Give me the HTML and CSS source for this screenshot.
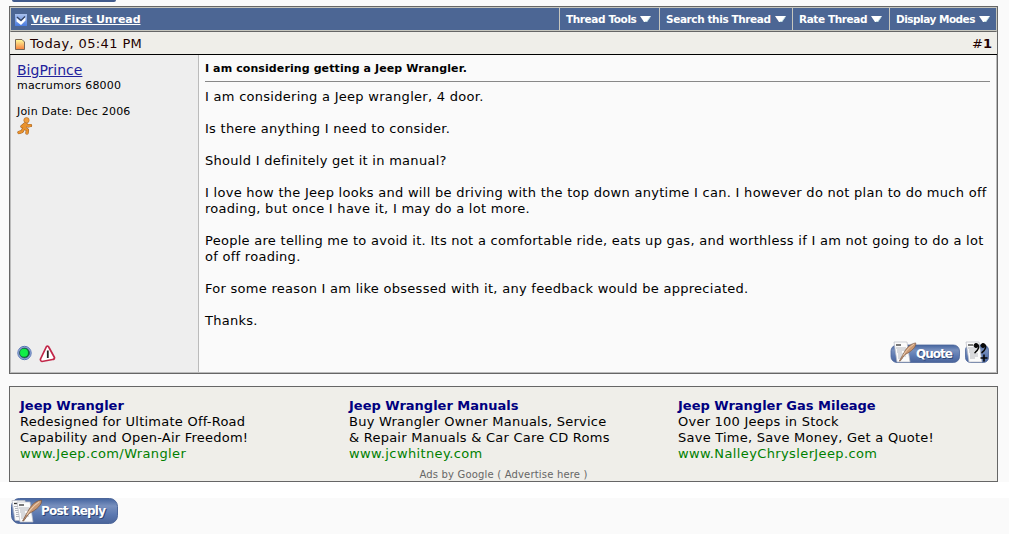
FILE: index.html
```html
<!DOCTYPE html>
<html lang="en">
<head>
  <meta charset="UTF-8">
  <title>I am considering getting a Jeep Wrangler.</title>
  <link rel="stylesheet" href="styles.css">
</head>
<body>

  <!-- shared gradients and paper drawing -->
  <svg class="defs" width="0" height="0">
    <defs>
      <linearGradient id="blue" x1="0" y1="0" x2="0" y2="1">
        <stop offset="0" stop-color="#45659f"/>
        <stop offset="0.3" stop-color="#7890be"/>
        <stop offset="0.65" stop-color="#5b78b0"/>
        <stop offset="1" stop-color="#4a649a"/>
      </linearGradient>
      <linearGradient id="folder" x1="0" y1="0" x2="0" y2="1">
        <stop offset="0" stop-color="#ffff9c"/>
        <stop offset="1" stop-color="#f8803c"/>
      </linearGradient>
      <linearGradient id="check" x1="0" y1="0" x2="0" y2="1">
        <stop offset="0" stop-color="#a9c0ec"/>
        <stop offset="1" stop-color="#4a7ce0"/>
      </linearGradient>
      <symbol id="paper" viewBox="0 0 18 22">
        <path d="M1 1L14 1L17 21L4 21Z" fill="#fbfbfb" stroke="#b9bcc4" stroke-width=".7"/>
        <path d="M3 4H8" stroke="#333" stroke-width="1.3"/>
        <path d="M3 7H13M4 9H13M4 11H9M5 13H13M5 15H13M5 17H10" stroke="#a4a7ae" stroke-width=".8"/>
      </symbol>
      <symbol id="quill" viewBox="0 0 20 22">
        <path d="M1 21L6 12C9 6 13 2 19 1C20 5 15 10 7 14L2 21Z" fill="#c99873" stroke="#76543f" stroke-width=".7"/>
        <path d="M5 15C9 9 12 6 17 2.500" fill="none" stroke="#efd1b2" stroke-width="1"/>
      </symbol>
      <symbol id="arrow" viewBox="0 0 11 7">
        <path d="M0 0H11L7 6H4Z" fill="#fff"/>
        <path d="M10 1L7 5.500H5" fill="none" stroke="#b5dade" stroke-width=".8"/>
      </symbol>
    </defs>
  </svg>

  <div class="top-button"></div>

  <div class="thread">
    <div class="toolbar">
      <div class="first-unread">
        <svg width="12" height="12" viewBox="0 0 12 12">
          <rect width="12" height="12" fill="url(#check)"/>
          <path d="M1.500 4L6 7.500L10.500 3V6.500L6 11L1.500 7.500Z" fill="#fff"/>
          <path d="M2 3L6 6.500L10 2.500" fill="none" stroke="#33415e" stroke-width="1.2"/>
        </svg>
        <a href="#">View First Unread</a>
      </div>
      <div class="tool tools">Thread Tools <svg width="11" height="7"><use href="#arrow"/></svg></div>
      <div class="tool search">Search this Thread <svg width="11" height="7"><use href="#arrow"/></svg></div>
      <div class="tool rate">Rate Thread <svg width="11" height="7"><use href="#arrow"/></svg></div>
      <div class="tool modes">Display Modes <svg width="11" height="7"><use href="#arrow"/></svg></div>
    </div>

    <div class="date-row">
      <svg width="10" height="11" viewBox="0 0 10 11">
        <path d="M.5 .5H7L9.500 3V10.500H.5Z" fill="url(#folder)" stroke="#776655"/>
      </svg>
      <span class="date">Today, 05:41 PM</span>
      <span class="number">#<b>1</b></span>
    </div>

    <div class="post">
      <div class="user">
        <a class="name" href="#">BigPrince</a>
        <div class="rank">macrumors 68000</div>
        <div class="joined">Join Date: Dec 2006</div>
        <svg class="runner" width="16" height="18" viewBox="0 0 16 18">
          <g fill="none" stroke="#8f501a" stroke-linecap="round" stroke-linejoin="round">
            <path d="M9 7L7.500 11M5 9.500L8 7L11 9L13.500 8.500M7.500 11L10.500 13L10 16M7 11L5 14.500L2 15.500" stroke-width="3.200"/>
            <path d="M9 7L7.500 11M5 9.500L8 7L11 9L13.500 8.500M7.500 11L10.500 13L10 16M7 11L5 14.500L2 15.500" stroke="#e8922e" stroke-width="2.400"/>
          </g>
          <circle cx="9.500" cy="3.200" r="2.700" fill="#f0a040" stroke="#a45c1c" stroke-width=".5"/>
        </svg>
        <div class="status">
          <svg width="16" height="16" viewBox="0 0 16 16">
            <circle cx="7.500" cy="8" r="6.700" fill="#9bb0dc" stroke="#5876b6"/>
            <circle cx="7.500" cy="8" r="5" fill="#08732e" stroke="#274b66" stroke-width=".8"/>
            <circle cx="7" cy="7.700" r="4" fill="#10ed48"/>
          </svg>
          <svg class="report" width="17" height="18" viewBox="0 0 16 18">
            <path d="M7 1.500Q8.500 .5 9.500 2.500L15 12.500Q15 14.500 13 14.500L2.500 16.500Q.5 16 1 14Z" fill="#fff" stroke="#c22648" stroke-width="1.700"/>
            <path d="M8.300 5.500V13" stroke="#222" stroke-width="1.800"/>
          </svg>
        </div>
      </div>

      <div class="message">
        <div class="title">I am considering getting a Jeep Wrangler.</div>
        <p>I am considering a Jeep wrangler, 4 door.</p>
        <p>Is there anything I need to consider.</p>
        <p>Should I definitely get it in manual?</p>
        <p>I love how the Jeep looks and will be driving with the top down anytime I can. I however do not plan to do much off<br>roading, but once I have it, I may do a lot more.</p>
        <p>People are telling me to avoid it. Its not a comfortable ride, eats up gas, and worthless if I am not going to do a lot<br>of off roading.</p>
        <p>For some reason I am like obsessed with it, any feedback would be appreciated.</p>
        <p>Thanks.</p>
        <div class="buttons">
          <svg width="70" height="23" viewBox="0 0 70 23">
            <rect x="1" y="4" width="68.500" height="17.500" rx="6" fill="url(#blue)" stroke="#4c669a" stroke-width=".8"/>
            <use href="#paper" x="3" y="0" width="18" height="22"/>
            <use href="#quill" x="8" y="1" width="19" height="20"/>
            <text class="label-shadow" x="27" y="18" font-size="12" textLength="37">Quote</text>
            <text x="26" y="17" font-size="12" textLength="37">Quote</text>
          </svg>
          <svg width="26" height="23" viewBox="0 0 26 23">
            <rect x="1.500" y="4" width="23" height="17.500" rx="5" fill="url(#blue)" stroke="#4c669a" stroke-width=".8"/>
            <use href="#paper" x="1" y="0" width="18" height="22"/>
            <g fill="#080808" stroke="#080808">
              <circle cx="12" cy="4.500" r="2" />
              <path d="M13 3C16 5 14.500 9.500 10.500 12" fill="none" stroke-width="1.500"/>
              <circle cx="19" cy="4.500" r="2"/>
              <path d="M20 3C23 5 21.500 9.500 17.500 12" fill="none" stroke-width="1.500"/>
            </g>
            <path d="M20 13.500V20.500M16.500 17H23.500" stroke="#080808" stroke-width="1.600"/>
          </svg>
        </div>
      </div>
    </div>
  </div>

  <div class="ads">
    <div class="ad-list">
      <div class="ad">
        <a class="ad-title" href="#">Jeep Wrangler</a>
        <div>Redesigned for Ultimate Off-Road</div>
        <div>Capability and Open-Air Freedom!</div>
        <div class="url">www.Jeep.com/Wrangler</div>
      </div>
      <div class="ad">
        <a class="ad-title" href="#">Jeep Wrangler Manuals</a>
        <div>Buy Wrangler Owner Manuals, Service</div>
        <div>&amp; Repair Manuals &amp; Car Care CD Roms</div>
        <div class="url">www.jcwhitney.com</div>
      </div>
      <div class="ad">
        <a class="ad-title" href="#">Jeep Wrangler Gas Mileage</a>
        <div>Over 100 Jeeps in Stock</div>
        <div>Save Time, Save Money, Get a Quote!</div>
        <div class="url">www.NalleyChryslerJeep.com</div>
      </div>
    </div>
    <div class="ads-by">Ads by Google ( Advertise here )</div>
  </div>

  <div class="footer">
    <svg width="108" height="27" viewBox="0 0 108 27">
      <rect x="1.500" y=".5" width="106" height="25" rx="8" fill="url(#blue)" stroke="#4c669a"/>
      <use href="#paper" x="1" y="1" width="18" height="23"/>
      <use href="#paper" x="6" y="2" width="18" height="24"/>
      <use href="#quill" x="11" y="1" width="22" height="23"/>
      <text class="label-shadow" x="32" y="18" font-size="12" textLength="65">Post Reply</text>
      <text x="31" y="17" font-size="12" textLength="65">Post Reply</text>
    </svg>
  </div>

</body>
</html>
```

FILE: styles.css
```css
body {
  margin: 0;
  background: #fafafa;
  font-family: Verdana, "DejaVu Sans", sans-serif;
  font-size: 13px;
  line-height: 16px;
  color: #000;
  overflow: hidden;
}

* {
  box-sizing: border-box;
}

svg {
  display: block;
  flex: none;
}

svg text {
  font-weight: bold;
  fill: #fff;
}

svg .label-shadow {
  fill: #2c4475;
}

.defs {
  position: absolute;
}

.top-button {
  width: 104px;
  height: 2px;
  margin: 0 0 4px 12px;
  background: #405a8c;
  border-radius: 0 0 8px 8px;
}

.thread {
  width: 989px;
  height: 368px;
  margin-left: 9px;
  border: 1px solid #666;
}

.toolbar {
  display: flex;
  height: 25px;
  border: 1px solid #c6c6be;
  border-bottom: 1px solid #666;
  background: #4c6694;
  box-shadow: inset 0 -1px #c6c6be;
  color: #fff;
  font-size: 11px;
  font-weight: bold;
  line-height: 22px;
}

.first-unread {
  display: flex;
  flex: 1;
  align-items: center;
  gap: 4px;
  padding-left: 4px;
}

.first-unread a {
  color: #fff;
  letter-spacing: -0.08px;
}

.tool {
  display: flex;
  align-items: center;
  gap: 4px;
  padding: 0 0 1px 6px;
  border-left: 1px solid #c6c6be;
  font-size: 10.5px;
  letter-spacing: -0.4px;
  white-space: nowrap;
}

.tools {
  width: 100px;
}

.search {
  width: 133px;
}

.rate {
  width: 97px;
}

.modes {
  width: 107px;
  letter-spacing: -0.5px;
}

.date-row {
  display: flex;
  align-items: center;
  height: 23px;
  padding: 2px 5px 0;
  border-bottom: 1px solid #000;
  background: #efeee9;
  color: #200;
}

.date {
  margin-left: 5px;
  letter-spacing: 0.38px;
}

.number {
  margin-left: auto;
}

.number b {
  font-size: 13px;
}

.post {
  display: flex;
  height: 318px;
  border: 1px solid #bbb;
  border-top: 0;
}

.user {
  display: flex;
  flex-direction: column;
  width: 188px;
  padding: 7px 6px 9px;
  border-right: 1px solid #bbb;
  background: #eee;
  font-size: 11px;
  line-height: 13px;
  letter-spacing: 0.2px;
}

.name {
  color: #22229c;
  font-size: 14px;
  line-height: 17px;
  letter-spacing: 0;
}

.joined {
  margin-top: 13px;
}

.runner {
  margin-top: -1px;
}

.status {
  display: flex;
  gap: 6px;
  margin-top: auto;
}

.message {
  flex: 1;
  padding: 6px 6px 0;
  white-space: nowrap;
}

.title {
  height: 21px;
  margin-bottom: 7px;
  border-bottom: 1px solid #888;
  font-size: 11px;
  font-weight: bold;
  letter-spacing: 0.1px;
}

p {
  margin: 0 0 16px;
  letter-spacing: 0.28px;
}

.buttons {
  display: flex;
  justify-content: flex-end;
  gap: 4px;
  margin-top: -4px;
}

.ads {
  width: 989px;
  height: 96px;
  margin: 12px 0 0 9px;
  padding: 11px 10px 0;
  border: 1px solid #666;
  background: #efeee9;
}

.ad-list {
  display: grid;
  grid-template-columns: 329px 329px 1fr;
  letter-spacing: 0.24px;
  white-space: nowrap;
}

.ad-title {
  display: block;
  color: #000080;
  font-weight: bold;
  letter-spacing: 0;
  text-decoration: none;
}

.url {
  color: #008000;
  letter-spacing: 0.38px;
}

.ads-by {
  margin-top: 5px;
  color: #666;
  font-size: 10px;
  letter-spacing: 0.18px;
  text-align: center;
}

.footer {
  height: 52px;
  padding-left: 10px;
  border-top: 16px solid #fff;
}
```
